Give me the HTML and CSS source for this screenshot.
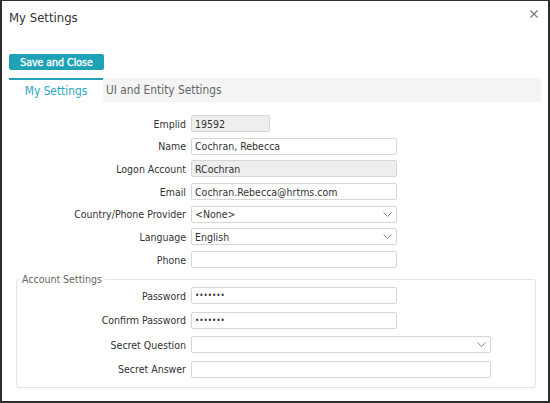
FILE: index.html
```html
<!DOCTYPE html>
<html>
<head>
<meta charset="utf-8">
<link rel="stylesheet" href="styles.css">
</head>
<body>
<div class="dialog">
  <div class="titlebar">
    <span class="title">My Settings</span>
    <svg class="close" width="8" height="8" viewBox="0 0 8 8"><path d="M0.5 0.5L7.5 7.5M7.5 0.5L0.5 7.5" stroke="#777" stroke-width="1.2"/></svg>
  </div>
  <button class="save">Save and Close</button>
  <div class="tabs">
    <div class="tab active">My Settings</div>
    <div class="tab">UI and Entity Settings</div>
  </div>
  <div class="form">
    <label class="lbl">Emplid</label>
    <div class="field ro short">19592</div>
    <label class="lbl">Name</label>
    <div class="field">Cochran, Rebecca</div>
    <label class="lbl">Logon Account</label>
    <div class="field ro">RCochran</div>
    <label class="lbl">Email</label>
    <div class="field">Cochran.Rebecca@hrtms.com</div>
    <label class="lbl">Country/Phone Provider</label>
    <div class="field sel">&lt;None&gt;<svg class="chev" width="9" height="5" viewBox="0 0 9 5"><path d="M0.5 0.5L4.5 4.5L8.5 0.5" fill="none" stroke="#888" stroke-width="1"/></svg></div>
    <label class="lbl">Language</label>
    <div class="field sel">English<svg class="chev" width="9" height="5" viewBox="0 0 9 5"><path d="M0.5 0.5L4.5 4.5L8.5 0.5" fill="none" stroke="#888" stroke-width="1"/></svg></div>
    <label class="lbl">Phone</label>
    <div class="field"></div>
  </div>
  <fieldset class="account">
    <legend>Account Settings</legend>
    <div class="form inner">
      <label class="lbl">Password</label>
      <div class="field dots">•••••••</div>
      <label class="lbl">Confirm Password</label>
      <div class="field dots">•••••••</div>
      <label class="lbl">Secret Question</label>
      <div class="field sel wide"><svg class="chev" width="9" height="5" viewBox="0 0 9 5"><path d="M0.5 0.5L4.5 4.5L8.5 0.5" fill="none" stroke="#888" stroke-width="1"/></svg></div>
      <label class="lbl">Secret Answer</label>
      <div class="field wide"></div>
    </div>
  </fieldset>
</div>
</body>
</html>
```
FILE: styles.css
```css
html, body {
  margin: 0;
  padding: 0;
  background: #fff;
}
.dialog {
  width: 550px;
  height: 403px;
  box-sizing: border-box;
  border: 2px solid #2e2e2e;
  border-top-width: 1px;
  padding: 0 7px;
  font-family: "DejaVu Sans Condensed", "DejaVu Sans", sans-serif;
  font-size: 10.5px;
  color: #333;
}
.titlebar {
  height: 32px;
  display: flex;
  align-items: center;
  justify-content: space-between;
}
.title {
  font-size: 13px;
  color: #333;
}
.close {
  margin-right: 3px;
  margin-top: -6px;
}
.save {
  display: block;
  margin: 21px 0 0 0;
  width: 95px;
  height: 16px;
  padding: 0;
  border: none;
  border-radius: 2px;
  background: #1fa2b6;
  color: #fff;
  font-family: inherit;
  font-size: 10.5px;
  font-weight: normal;
  -webkit-text-stroke: 0.35px #fff;
}
.tabs {
  margin-top: 8px;
  display: flex;
  height: 24px;
  background: #f4f4f4;
}
.tab {
  display: flex;
  align-items: center;
  color: #666;
  padding-left: 3px;
  font-size: 11.8px;
}
.tab.active {
  width: 94px;
  box-sizing: border-box;
  padding-left: 0;
  justify-content: center;
  background: #fff;
  border-top: 2px solid #1fa2b6;
  color: #2aa6c0;
}
.form {
  margin-top: 13px;
  display: grid;
  grid-template-columns: 177px auto;
  column-gap: 5px;
  row-gap: 5.7px;
  align-items: center;
}
.lbl {
  text-align: right;
}
.field {
  box-sizing: border-box;
  height: 17px;
  width: 206px;
  border: 1px solid #d6d6d6;
  border-radius: 2px;
  background: #fff;
  padding: 0 3px;
  display: flex;
  align-items: center;
  justify-content: space-between;
  white-space: nowrap;
}
.field.ro {
  background: #eeeeee;
}
.field.short {
  width: 79px;
}
.field.wide {
  width: 300px;
}
.chev {
  margin-right: 1px;
}
.sel {
  justify-content: space-between;
}
.sel.wide {
  justify-content: flex-end;
}
.dots {
  font-size: 8px;
  letter-spacing: 0;
}
.account {
  margin: 5px 5px 0 7px;
  padding: 0 0 9px 0;
  border: 1px solid #e0e6ea;
  border-radius: 3px;
}
.account legend {
  margin-left: 2px;
  padding: 0 3px;
  color: #666;
  font-size: 10.5px;
}
.form.inner {
  margin-top: 2px;
  grid-template-columns: 169px auto;
  row-gap: 7.6px;
}
```
